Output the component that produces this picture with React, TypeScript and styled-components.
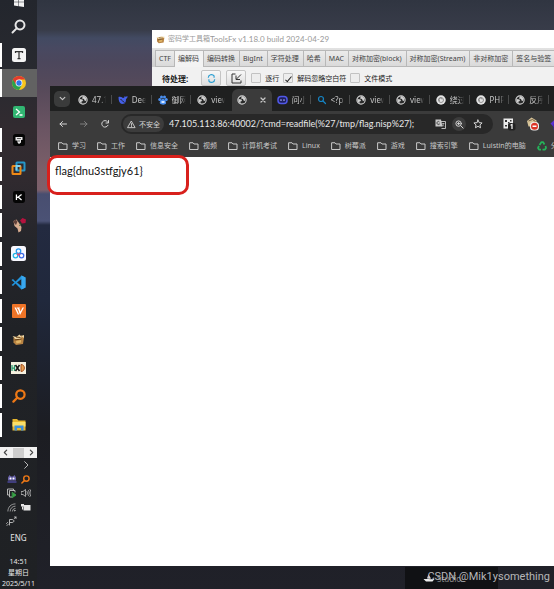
import React from "react";
import styled, { createGlobalStyle, css } from "styled-components";

const UI = `"Noto Sans", "Noto Sans CJK SC", sans-serif`;
const HUMANIST = `Lato, "Noto Sans CJK SC", sans-serif`;

const Global = createGlobalStyle`
  *, *::before, *::after { box-sizing: border-box; }
  body { margin: 0; background: #1f2024; font-family: ${UI}; overflow: hidden; }
  button, input { font: inherit; color: inherit; margin: 0; padding: 0; border: 0; background: none; }
  a { color: inherit; text-decoration: none; }
  svg { display: block; flex: none; }
`;

const Desktop = styled.div`
  display: flex;
  height: 100vh;
  overflow: hidden;
`;

/* ---------- Taskbar ---------- */

const Taskbar = styled.nav`
  flex: none;
  width: 37px;
  display: flex;
  flex-direction: column;
  overflow: hidden;
  background: linear-gradient(#23262d 0, #292a30 80px, #322b30 130px, #302a2f 180px, #25262b 240px, #202226 330px, #1f2124 100%);
  color: #e6e6e6;
`;

const StartButton = styled.button`
  display: flex;
  justify-content: center;
  align-items: flex-end;
  flex: none;
  height: 12px;
  padding-bottom: 5px;
`;

const AppList = styled.div`
  display: grid;
  grid-template-rows: repeat(15, 1fr);
  flex: none;
  height: 427px;
`;

const AppButton = styled.button<{ $running?: boolean; $active?: boolean }>`
  display: flex;
  align-items: center;
  justify-content: center;
  ${(p) =>
    p.$running &&
    css`
      background: linear-gradient(#fff, #fff) left center / 2px ${p.$active ? "100%" : "24px"} no-repeat;
    `}
  ${(p) => p.$active && css`background-color: #626262;`}
`;

const ScrollStrip = styled.div`
  display: flex;
  flex: none;
  align-items: center;
  justify-content: space-between;
  height: 11px;
  margin-top: 8px;
  padding: 0 2px;
  background: #f1f1f1;
  color: #444;
`;

const ScrollThumb = styled.span`
  width: 11px;
  height: 10px;
  background: #cdcdcd;
`;

const Tray = styled.div`
  display: grid;
  grid-template-columns: 12px 12px;
  grid-auto-rows: 14px;
  justify-content: center;
  align-items: center;
  justify-items: center;
  gap: 0 2px;
  color: #c4c4c4;
`;

const TrayButton = styled.button<{ $col?: number }>`
  display: flex;
  ${(p) => p.$col && css`grid-column: ${p.$col};`}
`;

const Lang = styled.button`
  font-size: 8px;
  line-height: 12px;
  margin-top: 4px;
`;

const Clock = styled.time`
  display: flex;
  flex-direction: column;
  align-items: center;
  margin-top: 12px;
  font-size: 7px;
  line-height: 11px;
  white-space: nowrap;
`;

/* ---------- Wallpaper and windows ---------- */

const Workspace = styled.main`
  position: relative;
  flex: 1;
  min-width: 0;
  overflow: hidden;
  background: linear-gradient(
    #303541 0,
    #383c49 30px,
    #424a62 38px,
    #484961 48px,
    #4c475c 62px,
    #574a5a 90px,
    #6b5563 130px,
    #7b5f69 170px,
    #7c606b 190px,
    #484e70 194px,
    #4b5275 221px,
    #232a40 225px,
    #20283c 300px,
    #1d212c 380px,
    #1c1d22 430px,
    #202129 100%
  );
`;

const Window = styled.section`
  position: absolute;
  right: 0;
  display: flex;
  flex-direction: column;
  overflow: hidden;
`;

const ToolWindow = styled(Window)`
  left: 115px;
  top: 30px;
  background: #f1f1f1;
  color: #222;
  font-size: 7px;
`;

const TitleBar = styled.header`
  display: flex;
  align-items: center;
  height: 18px;
  padding-left: 4px;
  background: #fff;
  color: #999;
  line-height: 12px;
  white-space: nowrap;
`;

const TitleName = styled.span`
  margin-left: 3px;
`;

const TitleVersion = styled.span`
  font-family: ${HUMANIST};
  font-size: 8px;
`;

const ToolTabs = styled.div`
  display: flex;
  align-items: flex-end;
  height: 19px;
  padding-left: 3px;
  background: linear-gradient(#e2e2e2, #cfcfcf);
`;

const ToolTab = styled.button<{ $active?: boolean }>`
  flex: none;
  height: 17px;
  padding: 0 4px 0 3px;
  border: 1px solid #b8b8b8;
  border-left-width: 0;
  border-bottom-width: ${(p) => (p.$active ? 0 : 1)}px;
  background: ${(p) => (p.$active ? "#f3f3f3" : "linear-gradient(#ebebeb, #dadada)")};
  line-height: 14px;
  white-space: nowrap;
  color: #444;
  &:first-child { padding-right: 3px; border-left-width: 1px; }
`;

const ToolRow = styled.div`
  display: flex;
  align-items: center;
  height: 24px;
  padding: 0 0 2px 10px;
  white-space: nowrap;
`;

const RowTitle = styled.strong`
  margin-right: 13px;
  font-size: 8px;
`;

const SquareButton = styled.button`
  display: flex;
  align-items: center;
  justify-content: center;
  width: 20px;
  height: 16px;
  margin-right: 5px;
  border: 1px solid #c4c4c4;
  border-radius: 2px;
  background: linear-gradient(#f8f8f8, #dedede);
`;

const Check = styled.label`
  display: flex;
  align-items: center;
  gap: 4px;
  margin-right: 4px;
`;

const Box = styled.input`
  appearance: none;
  width: 10px;
  height: 10px;
  border: 1px solid #c2c2c2;
  border-radius: 1px;
  background: #ededed;
  display: grid;
  place-items: center;
  &:checked::after {
    content: "";
    width: 3px;
    height: 7px;
    border: solid #222;
    border-width: 0 1px 1px 0;
    transform: rotate(40deg);
  }
`;

const Browser = styled(Window)`
  left: 13px;
  top: 86px;
  bottom: 23px;
  background: #fff;
`;

const TabStrip = styled.div`
  display: flex;
  flex: none;
  align-items: flex-end;
  height: 25px;
  padding-right: 4px;
  background: #1f2020;
  color: #c7c7c7;
  font-size: 8px;
`;

const TabSearch = styled.button`
  display: flex;
  align-items: center;
  justify-content: center;
  flex: none;
  align-self: center;
  width: 16px;
  height: 16px;
  margin: 0 3px 0 4px;
  border-radius: 5px;
  background: #3a3b3b;
`;

const Tab = styled.button<{ $active?: boolean; $divider?: boolean }>`
  display: flex;
  align-items: center;
  flex: 1 1 0;
  min-width: 0;
  gap: 4px;
  height: 22px;
  padding: 0 5px;
  ${(p) =>
    p.$divider &&
    css`
      background: linear-gradient(#4a4b4b, #4a4b4b) right 1px top 6px / 1px 9px no-repeat;
    `}
  ${(p) =>
    p.$active &&
    css`
      justify-content: flex-start;
      gap: 13px;
      border-radius: 6px 6px 0 0;
      background: #3b3b3b;
    `}
`;

const TabLabel = styled.span`
  flex: none;
  width: 14px;
  overflow: hidden;
  text-align: left;
  line-height: 12px;
  white-space: nowrap;
  mask-image: linear-gradient(90deg, #000 60%, transparent);
`;

const NavBar = styled.div`
  display: flex;
  flex: none;
  align-items: center;
  height: 26px;
  padding: 0 0 0 8px;
  background: #3b3b3b;
  color: #d4d4d4;
`;

const NavButton = styled.button<{ $dim?: boolean }>`
  display: flex;
  flex: none;
  margin-right: 11px;
  opacity: ${(p) => (p.$dim ? 0.45 : 1)};
`;

const Omnibox = styled.div`
  display: flex;
  align-items: center;
  flex: 1;
  min-width: 0;
  height: 20px;
  padding: 0 8px 0 2px;
  border-radius: 10px;
  background: #282828;
`;

const Security = styled.button`
  display: flex;
  align-items: center;
  flex: none;
  gap: 3px;
  height: 16px;
  padding: 0 4px;
  margin-right: 5px;
  border-radius: 8px;
  background: #3c3c3c;
  font-size: 7px;
  white-space: nowrap;
`;

const Address = styled.input`
  flex: 1;
  min-width: 0;
  font-family: ${HUMANIST};
  font-size: 9px;
  line-height: 14px;
  outline: 0;
  color: #e8e8e8;
`;

const OmniActions = styled.div`
  display: flex;
  align-items: center;
  gap: 5px;
`;

const RoundButton = styled.button<{ $filled?: boolean }>`
  display: grid;
  place-items: center;
  width: 14px;
  height: 14px;
  border-radius: 7px;
  background: ${(p) => (p.$filled ? "#3c3c3c" : "none")};
`;

const Extensions = styled.div`
  display: flex;
  flex: none;
  align-items: center;
  gap: 10px;
  width: 61px;
  padding-left: 10px;
  overflow: hidden;
`;

const Bookmarks = styled.div`
  display: flex;
  flex: none;
  align-items: center;
  gap: 11px;
  height: 20px;
  padding: 0 0 2px 8px;
  overflow: hidden;
  background: #3b3b3b;
  color: #c9c9c9;
  font-size: 7px;
`;

const Bookmark = styled.a`
  display: flex;
  flex: none;
  align-items: center;
  gap: 4px;
  line-height: 10px;
  white-space: nowrap;
`;

const Page = styled.article`
  padding: 6px 5px;
  font-family: ${HUMANIST};
  font-size: 11px;
  line-height: 16px;
  color: #111;
`;

const Highlight = styled.div`
  position: absolute;
  left: 10px;
  top: 155px;
  width: 142px;
  height: 40px;
  border: 3px solid #d8201c;
  border-radius: 10px;
`;

const TaskPreview = styled.div`
  position: absolute;
  right: 56px;
  bottom: 0;
  display: flex;
  align-items: center;
  gap: 2px;
  width: 93px;
  height: 22px;
  padding-left: 18px;
  background: #101114;
  color: #8a8a8a;
  font-size: 8px;
`;

const Watermark = styled.div`
  position: absolute;
  right: 4px;
  bottom: 4px;
  font-family: Roboto, sans-serif;
  font-size: 11px;
  line-height: 16px;
  color: #b6b6b8;
`;

/* ---------- Icons ---------- */

type S = { size?: number };
const line = { fill: "none", stroke: "currentColor", strokeLinecap: "round", strokeLinejoin: "round" } as const;

const Globe = ({ size = 10 }: S) => (
  <svg width={size} height={size} viewBox="0 0 20 20">
    <circle cx="10" cy="10" r="8.3" fill="#292a2a" stroke="#d0d0d0" strokeWidth="2.2" />
    <path d="M3 8l6 1 1 3-3 1v4l-4-4zM10 2l7 4-1 6-3-1-1-3-4-1z" fill="#d0d0d0" />
  </svg>
);
const Folder = () => (
  <svg width="10" height="10" viewBox="0 0 20 20" {...line} strokeWidth="2">
    <path d="M2 3.5h6l2 2.5h8v11H2z" />
  </svg>
);
const Whale = () => (
  <svg width="10" height="10" viewBox="0 0 20 20">
    <path d="M1 4c3-1 6 0 9 2 3 0 3-2 3-4 1 2 3 2 6 0 0 4-1 5-3 6 0 5-1 7-3 9l-5 1C3 17 1 12 1 4z" fill="#4560e8" />
    <path d="M5 9c3 0 5 5 8 6" stroke="#1f2020" strokeWidth="2" fill="none" />
  </svg>
);
const Paw = () => (
  <svg width="10" height="10" viewBox="0 0 20 20" fill="#4a8ff0">
    <circle cx="3.5" cy="9" r="3" /><circle cx="7" cy="4" r="3" /><circle cx="13" cy="4" r="3" /><circle cx="16.5" cy="9" r="3" />
    <path d="M10 7c4 2 7 7 6 10s-10 3-12 0 2-8 6-10z" />
    <path d="M7 12h6v4H7z" fill="#d6e6ff" />
  </svg>
);
const ChatBot = () => (
  <svg width="11" height="10" viewBox="0 0 22 20">
    <rect x="2" y="3" width="18" height="14" rx="6" fill="#1f2060" stroke="#5058e8" strokeWidth="3" />
    <circle cx="8" cy="10" r="1.7" fill="#aab0ff" /><circle cx="14" cy="10" r="1.7" fill="#aab0ff" />
  </svg>
);
const Magnifier = ({ size = 10, color = "currentColor", flip = false, w = 2.4 }: S & { color?: string; flip?: boolean; w?: number }) => (
  <svg width={size} height={size} viewBox="0 0 20 20" fill="none" stroke={color} strokeWidth={w} strokeLinecap="round">
    {flip ? <><circle cx="12" cy="8" r="6" /><path d="M7.5 12.5L2 18" /></> : <><circle cx="8" cy="8" r="5" /><path d="M12 12l5 5" /></>}
  </svg>
);
const Swirl = () => (
  <svg width="10" height="10" viewBox="0 0 20 20">
    <circle cx="10" cy="10" r="9.5" fill="#e4e4e4" />
    <circle cx="10" cy="10" r="5" fill="none" stroke="#777" strokeWidth="1.5" />
    <path d="M8 12a3 3 0 1 1 4-3" fill="none" stroke="#777" strokeWidth="1.5" />
  </svg>
);
const Close = () => (
  <svg width="6" height="6" viewBox="0 0 12 12" {...line} strokeWidth="2.6"><path d="M2 2l8 8M10 2l-8 8" /></svg>
);
const Chevron = ({ d = "M2 4l4 4 4-4", size = 7, w = 2 }: S & { d?: string; w?: number }) => (
  <svg width={size} height={size} viewBox="0 0 12 12" {...line} strokeWidth={w}><path d={d} /></svg>
);
const Arrow = ({ right = false }: { right?: boolean }) => (
  <svg width="10" height="10" viewBox="0 0 20 20" {...line} strokeWidth="2">
    <path d={right ? "M3 10h13M11 5l5 5-5 5" : "M17 10H4M9 5l-5 5 5 5"} />
  </svg>
);
const Reload = () => (
  <svg width="10" height="10" viewBox="0 0 20 20" {...line} strokeWidth="2"><path d="M16 12.500a6.500 6.500 0 1 1-1-7l2 2M17 3v5h-5" /></svg>
);
const Warn = () => (
  <svg width="9" height="9" viewBox="0 0 20 20" {...line} strokeWidth="2"><path d="M10 3l8 14H2zM10 8v4M10 14.500v.5" /></svg>
);
const Translate = () => (
  <svg width="11" height="10" viewBox="0 0 22 20">
    <path d="M1 1h11l3 14H1z" fill="#c9c9c9" />
    <path d="M10 5h11v14h-8" fill="none" stroke="#c9c9c9" strokeWidth="1.8" />
    <path d="M9 6a3 3 0 1 0 0 4H7" fill="none" stroke="#303030" strokeWidth="1.5" />
    <path d="M14 9h5M17 8c0 4-2 6-3 7M14 11l4 4" stroke="#c9c9c9" strokeWidth="1.3" fill="none" />
  </svg>
);
const ZoomIn = () => (
  <svg width="9" height="9" viewBox="0 0 20 20" {...line} strokeWidth="2.200"><circle cx="8" cy="8" r="6" /><path d="M13 13l5 5M8 5.500v5M5.500 8h5" /></svg>
);
const Star = () => (
  <svg width="10" height="10" viewBox="0 0 20 20" {...line} strokeWidth="2"><path d="M10 2l2.400 5.300 5.800.6-4.300 3.900 1.200 5.700L10 14.600l-5.100 2.900 1.200-5.700-4.300-3.900 5.800-.6z" /></svg>
);
const QrExt = () => (
  <svg width="13" height="13" viewBox="0 0 26 26">
    <path d="M1 1h19v12H1zM1 13h9v8H1z" fill="#ececec" />
    <path d="M4 4h4v4H4zM14 4h3v3h-3zM4 14h4v3H4zM10 8h3v3h-3z" fill="#333" />
    <rect x="10" y="10" width="15" height="15" rx="4" fill="#222" />
    <path d="M15 14.500l3-1.500v9" stroke="#fff" strokeWidth="2.400" fill="none" />
  </svg>
);
const BlockExt = () => (
  <svg width="14" height="14" viewBox="0 0 28 28">
    <path d="M2 8l9-7 10 6v12H5z" fill="#d8c59a" /><path d="M5 8l8-3 6 4" stroke="#766040" strokeWidth="2" fill="none" />
    <rect x="8" y="10" width="18" height="17" rx="7" fill="#eee" /><circle cx="17" cy="18.500" r="7" fill="#dd3427" /><path d="M13 18.500h8" stroke="#fff" strokeWidth="3" />
  </svg>
);
const PurpleExt = () => (
  <svg width="14" height="14" viewBox="0 0 28 28"><path d="M1 13L13 2l13 11-13 13z" fill="#5a2fd0" /><rect x="7" y="12" width="18" height="15" rx="4" fill="#4022a8" /><path d="M11 16h7M11 21h7" stroke="#fff" strokeWidth="2" /></svg>
);
const Recycle = () => (
  <svg width="10" height="10" viewBox="0 0 20 20" fill="none" stroke="#25b35a" strokeWidth="3.500" strokeLinejoin="round"><path d="M5 8l4-6h3l3 5M17 10l1 4-2 3h-5M8 17H4l-2-3 2-4" /></svg>
);
const WindowsLogo = () => (
  <svg width="10" height="10" viewBox="0 0 20 20" fill="#f2f2f2"><path d="M0 3l9-1.300V9.500H0zM10 1.500L20 0v9.500H10zM0 10.500h9v8L0 17zM10 10.500h10V20l-10-1.500z" /></svg>
);
const LetterTile = ({ dark = false }: { dark?: boolean }) => (
  <svg width={dark ? 12 : 14} height={dark ? 12 : 14} viewBox="0 0 28 28">
    <rect width="28" height="28" rx="5" fill={dark ? "#050505" : "#f4f4f4"} />
    {dark ? <path d="M8 8v13M20 8l-8 6 8 7M8 15h5" stroke="#fff" strokeWidth="3" fill="none" /> : <path d="M7 10V7h14v3M14 7v14M11 21h6" stroke="#333" strokeWidth="2.500" fill="none" />}
  </svg>
);
const ChromeLogo = () => (
  <svg width="14" height="14" viewBox="0 0 28 28">
    <circle cx="14" cy="14" r="14" fill="#f9c51c" />
    <path d="M14 14L1.900 7A14 14 0 0 0 14 28l6-10.500z" fill="#2ba24c" />
    <path d="M14 7h12.100A14 14 0 0 0 1.900 7l6 10z" fill="#e33b2e" />
    <circle cx="14" cy="14" r="6.800" fill="#fff" /><circle cx="14" cy="14" r="5.300" fill="#2f76e8" />
  </svg>
);
const Terminal = () => (
  <svg width="12" height="12" viewBox="0 0 24 24"><rect width="24" height="24" rx="4" fill="#31b672" /><path d="M6 6l7 6-7 6M13 18h6" stroke="#fff" strokeWidth="2.600" fill="none" /></svg>
);
const Cursor = () => (
  <svg width="12" height="12" viewBox="0 0 24 24"><rect width="24" height="24" rx="5" fill="#050505" /><path d="M5 6h14v6h-3v5l-4 3-3-3v-4H5z" fill="#e8e8e8" /><path d="M8 9h8M12 12v4" stroke="#333" strokeWidth="1.5" /></svg>
);
const VmSquares = () => (
  <svg width="15" height="15" viewBox="0 0 30 30" fill="none" strokeWidth="4"><rect x="11" y="3" width="16" height="16" rx="1" stroke="#2597c9" /><rect x="3" y="10" width="16" height="16" rx="1" stroke="#ef8a17" /><path d="M11 19v-9h8" stroke="#80d2ee" /></svg>
);
const Rose = () => (
  <svg width="14" height="15" viewBox="0 0 28 30"><path d="M3 6l6-3 5 7 5 8-1 8-5 3-2-8-6-5z" fill="#d8ad91" /><path d="M2 8l5-5 4 4-3 7z" fill="#60413a" /><path d="M16 5l5-5 7 3-1 7-7 1z" fill="#b5123e" /><path d="M18 11l-3 5" stroke="#3f6b3a" strokeWidth="2" /></svg>
);
const CloudTile = () => (
  <svg width="15" height="15" viewBox="0 0 30 30"><rect width="30" height="30" rx="5" fill="#f8f8ff" /><g fill="none" strokeWidth="2.500"><circle cx="15" cy="10" r="4.500" stroke="#2698f0" /><circle cx="9" cy="19" r="4.500" stroke="#20b4e8" /><circle cx="21" cy="19" r="4.500" stroke="#3a6be8" /><path d="M12 15l3 3 3-3" stroke="#ef496f" /></g></svg>
);
const VsCode = () => (
  <svg width="15" height="15" viewBox="0 0 30 30"><path d="M21 1l8 4v20l-8 4L9 17l-5 5-3-2 6-5-6-5 3-2 5 5z" fill="#2294dc" /><path d="M21 8v14l-9-7z" fill="#20242b" /><path d="M21 1l8 4v20l-8 4z" fill="#39a8ef" /></svg>
);
const OrangeTile = () => (
  <svg width="14" height="14" viewBox="0 0 28 28"><rect width="28" height="28" rx="2" fill="#ef7427" /><path d="M5 7h3l6 13-2 2zM11 7h3l3 8 4-8h3l-8 15zM9 7h7l-3 5z" fill="#fff" /></svg>
);
const ToolBag = ({ size = 13 }: S) => (
  <svg width={size} height={size} viewBox="0 0 26 26"><path d="M3 9l16-4 5 4-2 13-14 2-5-5z" fill="#b88343" /><path d="M1 6l8 2 6-5 4 5-3 5-9-1zM18 6l6-2v6z" fill="#efd7a5" /><path d="M5 14l14-2M8 8l9 1" stroke="#654018" strokeWidth="2" /><path d="M8 16l10-2v5l-9 2z" fill="#dfb465" /></svg>
);
const HxD = () => (
  <svg width="15" height="12" viewBox="0 0 30 24"><rect width="30" height="24" fill="#f4f0df" /><path d="M2 6v12M7 6v12M2 12h5" stroke="#27976c" strokeWidth="2.500" /><path d="M9 6l8 12M17 6L9 18" stroke="#111" strokeWidth="3" /><path d="M20 5v14c9 0 9-14 0-14z" fill="#e8a353" stroke="#a54c1d" strokeWidth="2" /></svg>
);
const Explorer = () => (
  <svg width="14" height="13" viewBox="0 0 28 26"><path d="M1 2h9l3 3h14v20H1z" fill="#e6b62e" /><path d="M1 8h26v9H1z" fill="#fadf69" /><path d="M5 25V15h18v10h-5v-5h-8v5z" fill="#3e91d9" /></svg>
);
const Bot = () => (
  <svg width="10" height="10" viewBox="0 0 20 20"><path d="M2 7l3-5 3 3h4l3-3 3 5v6H2z" fill="#6a64ab" /><path d="M1 14h18v4H1z" fill="#3f3d7c" /><circle cx="7" cy="9" r="2" fill="#fff" /><circle cx="13" cy="9" r="2" fill="#fff" /></svg>
);
const Clipboard = () => (
  <svg width="10" height="10" viewBox="0 0 20 20" {...line} strokeWidth="1.800"><path d="M4 14H1V2h12v2M16 8V5H5v13h5" /><path d="M11 9l7 5-7 5z" fill="#39a447" stroke="#39a447" /></svg>
);
const Speaker = () => (
  <svg width="10" height="10" viewBox="0 0 20 20" {...line} strokeWidth="1.600"><path d="M1 7h3l5-4v14l-5-4H1zM12 7c1 2 1 4 0 6M15 5c2 3 2 7 0 10M18 3c3 4 3 10 0 14" /></svg>
);
const Wifi = () => (
  <svg width="9" height="9" viewBox="0 0 20 20" {...line} strokeWidth="1.600"><path d="M2 18C2 9 9 2 18 2M7 18c0-6 5-11 11-11M12 18c0-3 3-6 6-6" /><circle cx="17" cy="17" r="1" /></svg>
);
const Battery = () => (
  <svg width="10" height="9" viewBox="0 0 20 18" fill="#e6e6e6"><path d="M5 4h14v11H5zM0 2h6v5H0z" /><path d="M3 7v6" stroke="#e6e6e6" strokeWidth="2" /></svg>
);
const Pen = () => (
  <svg width="11" height="11" viewBox="0 0 22 22" {...line} strokeWidth="1.800"><path d="M7 18V7h5c5 0 5 6 0 6H8M17 5l3-3M17 2h3v3M3 13l-2 2M5 16l-3 3" /></svg>
);
const Refresh = () => (
  <svg width="9" height="9" viewBox="0 0 14 14" fill="none" stroke="#2c9fd2" strokeWidth="1.8"><path d="M2 6a5 5 0 0 1 9-3v3M12 8a5 5 0 0 1-9 3V8" /></svg>
);
const Import = () => (
  <svg width="11" height="11" viewBox="0 0 22 22" fill="none" stroke="#333" strokeWidth="2"><path d="M9 2H2v18h18v-5M20 3l-9 9M10 5v8h8" /></svg>
);
const Boat = () => (
  <svg width="12" height="8" viewBox="0 0 24 16" fill="#ededed"><path d="M1 10h22l-4 5H6zM11 1l5 8H8z" /></svg>
);

/* ---------- Data ---------- */

const apps: { name: string; icon: React.ReactNode; running?: boolean; active?: boolean }[] = [
  { name: "搜索", icon: <Magnifier size={15} flip w={2.6} /> },
  { name: "Typora", icon: <LetterTile />, running: true },
  { name: "Chrome", icon: <ChromeLogo />, running: true, active: true },
  { name: "Terminal", icon: <Terminal /> },
  { name: "Cursor", icon: <Cursor />, running: true },
  { name: "VMware", icon: <VmSquares />, running: true },
  { name: "Kimi", icon: <LetterTile dark />, running: true },
  { name: "Burp", icon: <Rose />, running: true },
  { name: "网盘", icon: <CloudTile />, running: true },
  { name: "VS Code", icon: <VsCode />, running: true },
  { name: "VNC", icon: <OrangeTile />, running: true },
  { name: "ToolsFx", icon: <ToolBag />, running: true },
  { name: "HxD", icon: <HxD />, running: true },
  { name: "Everything", icon: <Magnifier size={14} flip color="#ed7816" w={3.2} />, running: true },
  { name: "文件资源管理器", icon: <Explorer />, running: true },
];

const toolTabs = ["CTF", "编解码", "编码转换", "BigInt", "字符处理", "哈希", "MAC", "对称加密(block)", "对称加密(Stream)", "非对称加密", "签名与验签"];

const tabs: { label: string; icon: React.ReactNode; active?: boolean }[] = [
  { label: "47.1", icon: <Globe /> },
  { label: "Dee", icon: <Whale /> },
  { label: "御网", icon: <Paw /> },
  { label: "view", icon: <Globe /> },
  { label: "", icon: <Globe />, active: true },
  { label: "问小", icon: <ChatBot /> },
  { label: "<?p", icon: <Magnifier color="#1684c4" /> },
  { label: "view", icon: <Globe /> },
  { label: "view", icon: <Globe /> },
  { label: "绕过", icon: <Swirl /> },
  { label: "PHP", icon: <Swirl /> },
  { label: "反序", icon: <Globe /> },
];

const bookmarks = ["学习", "工作", "信息安全", "视频", "计算机考试", "Linux", "树莓派", "游戏", "搜索引擎", "Luistin的电脑"];

/* ---------- App ---------- */

export default function App() {
  return (
    <>
      <Global />
      <Desktop>
        <Taskbar>
          <StartButton aria-label="开始"><WindowsLogo /></StartButton>
          <AppList>
            {apps.map((a) => (
              <AppButton key={a.name} aria-label={a.name} $running={a.running} $active={a.active}>{a.icon}</AppButton>
            ))}
          </AppList>
          <ScrollStrip>
            <Chevron d="M8 2L4 6l4 4" /><ScrollThumb /><Chevron d="M4 2l4 4-4 4" />
          </ScrollStrip>
          <Tray>
            <TrayButton $col={2} aria-label="展开"><Chevron d="M4 1l5 5-5 5" size={8} w={1.4} /></TrayButton>
            <TrayButton $col={1} aria-label="助手"><Bot /></TrayButton>
            <TrayButton aria-label="Everything"><Magnifier size={9} flip color="#ed7816" w={3.2} /></TrayButton>
            <TrayButton aria-label="剪贴板"><Clipboard /></TrayButton>
            <TrayButton aria-label="音量"><Speaker /></TrayButton>
            <TrayButton aria-label="网络"><Wifi /></TrayButton>
            <TrayButton aria-label="电池"><Battery /></TrayButton>
            <TrayButton aria-label="手写笔"><Pen /></TrayButton>
          </Tray>
          <Lang>ENG</Lang>
          <Clock dateTime="2025-05-11T14:51"><span>14:51</span><span>星期日</span><span>2025/5/11</span></Clock>
        </Taskbar>

        <Workspace>
          <ToolWindow>
            <TitleBar>
              <ToolBag size={9} />
              <TitleName>密码学工具箱</TitleName>
              <TitleVersion>ToolsFx v1.18.0 build 2024-04-29</TitleVersion>
            </TitleBar>
            <ToolTabs>
              {toolTabs.map((t) => <ToolTab key={t} $active={t === "编解码"}>{t}</ToolTab>)}
            </ToolTabs>
            <ToolRow>
              <RowTitle>待处理:</RowTitle>
              <SquareButton aria-label="刷新"><Refresh /></SquareButton>
              <SquareButton aria-label="导入"><Import /></SquareButton>
              <Check><Box type="checkbox" />逐行</Check>
              <Check><Box type="checkbox" defaultChecked />解码忽略空白符</Check>
              <Check><Box type="checkbox" />文件模式</Check>
            </ToolRow>
          </ToolWindow>

          <TaskPreview><Boat /><span>Studio</span></TaskPreview>

          <Browser>
            <TabStrip>
              <TabSearch aria-label="搜索标签页"><Chevron /></TabSearch>
              {tabs.map((t, i) => (
                <Tab key={i} $active={t.active} $divider={!t.active && i !== 3} aria-label={t.label || "47.105.113.86"}>
                  {t.icon}
                  {t.active ? <Close /> : <TabLabel>{t.label}</TabLabel>}
                </Tab>
              ))}
            </TabStrip>
            <NavBar>
              <NavButton aria-label="后退"><Arrow /></NavButton>
              <NavButton aria-label="前进" $dim><Arrow right /></NavButton>
              <NavButton aria-label="重新加载"><Reload /></NavButton>
              <Omnibox>
                <Security><Warn />不安全</Security>
                <Address aria-label="地址" defaultValue="47.105.113.86:40002/?cmd=readfile(%27/tmp/flag.nisp%27);" />
                <OmniActions>
                  <RoundButton aria-label="翻译"><Translate /></RoundButton>
                  <RoundButton aria-label="缩放" $filled><ZoomIn /></RoundButton>
                  <RoundButton aria-label="收藏"><Star /></RoundButton>
                </OmniActions>
              </Omnibox>
              <Extensions><QrExt /><BlockExt /><PurpleExt /></Extensions>
            </NavBar>
            <Bookmarks>
              {bookmarks.map((b) => <Bookmark key={b} href="#"><Folder />{b}</Bookmark>)}
              <Bookmark href="#"><Recycle />分享</Bookmark>
            </Bookmarks>
            <Page>flag&#123;dnu3stfgjy61&#125;</Page>
          </Browser>

          <Highlight />
          <Watermark>CSDN @Mik1ysomething</Watermark>
        </Workspace>
      </Desktop>
    </>
  );
}
